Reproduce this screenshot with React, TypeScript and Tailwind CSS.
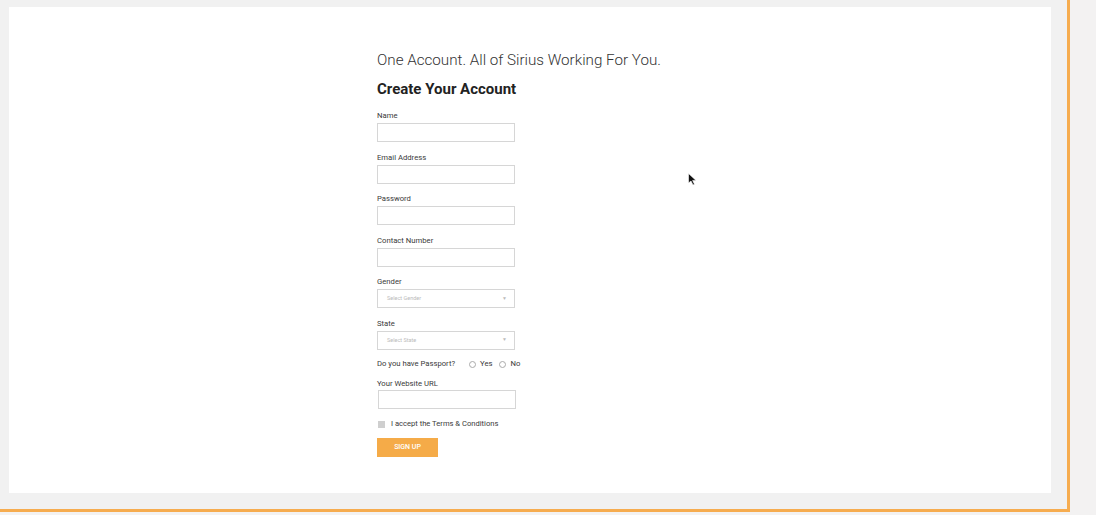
export default function App() {
  const fields = ["Name", "Email Address", "Password", "Contact Number"];
  return (
    <div className="h-[515px] w-[1096px] overflow-hidden bg-[#f3f2f2]" style={{ fontFamily: "Roboto, 'Liberation Sans', sans-serif" }}>
      <div className="h-[512px] w-[1070px] border-b-[3px] border-r-[3px] border-[#f6ac4f] bg-[#f1f1f1] pl-[9px] pt-[7px]">
        <div className="relative h-[486px] w-[1042px] bg-white pl-[368px] pt-[43px]">
          <h1 className="text-[15.2px] font-light leading-[20px] text-[#333]">One Account. All of Sirius Working For You.</h1>
          <h2 className="mt-[9px] text-[15px] font-bold leading-[20px] text-[#222]">Create Your Account</h2>

          <div className="mt-[12px] flex flex-col">
            {fields.map((f) => (
              <div key={f} className="flex h-[41.5px] flex-col">
                <label className="text-[7.7px] leading-[10px] text-[#3a3a3a]">{f}</label>
                <div className="mt-[2px] h-[19px] w-[138px] border border-[#d6d6d6] bg-white" />
              </div>
            ))}
            {["Gender", "State"].map((f) => (
              <div key={f} className="flex h-[41.5px] flex-col">
                <label className="text-[7.7px] leading-[10px] text-[#3a3a3a]">{f}</label>
                <div className="mt-[2px] flex h-[19px] w-[138px] items-center justify-between border border-[#d6d6d6] bg-white pl-[9px] pr-[7px]">
                  <span className="text-[5.5px] text-[#bbb]">Select {f}</span>
                  <span className="text-[5px] text-[#bbb]">▼</span>
                </div>
              </div>
            ))}
          </div>

          <div className="-mt-[1px] flex items-center text-[7.7px] leading-[10px] text-[#3a3a3a]">
            <span>Do you have Passport?</span>
            <span className="ml-[14px] inline-block h-[7px] w-[7px] rounded-full border border-[#aaa]" />
            <span className="ml-[4px]">Yes</span>
            <span className="ml-[7px] inline-block h-[7px] w-[7px] rounded-full border border-[#aaa]" />
            <span className="ml-[4px]">No</span>
          </div>

          <div className="mt-[10px] flex flex-col">
            <label className="text-[7.7px] leading-[10px] text-[#3a3a3a]">Your Website URL</label>
            <div className="mt-[1px] ml-[1px] h-[19px] w-[138px] border border-[#d6d6d6] bg-white" />
          </div>

          <div className="mt-[10px] flex items-center text-[7.6px] leading-[10px] text-[#3a3a3a]">
            <span className="ml-[1px] inline-block h-[7px] w-[7px] bg-[#cfcfcf]" />
            <span className="ml-[6px]">I accept the Terms &amp; Conditions</span>
          </div>

          <button className="mt-[9px] flex h-[19px] w-[61px] items-center justify-center bg-[#f5ab48] text-[7px] font-medium text-white">
            SIGN UP
          </button>

          <svg className="absolute left-[679px] top-[166px]" width="9" height="13" viewBox="0 0 9 13">
            <path d="M0.5 0.5 L0.5 10 L3 8 L5 12 L6.5 11.3 L4.6 7.4 L8 7.4 Z" fill="#111" stroke="#fff" strokeWidth="0.6" />
          </svg>
        </div>
      </div>
    </div>
  );
}
